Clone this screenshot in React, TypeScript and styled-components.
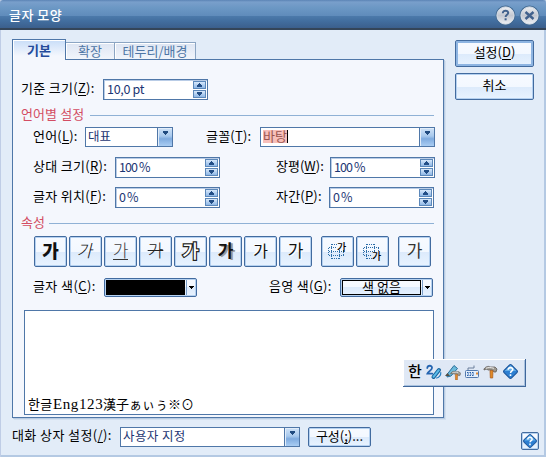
import React from "react";
import styled, { createGlobalStyle, css } from "styled-components";

const edge = "#4f77a8";
const ink = "#1d3673";

const GlobalStyle = createGlobalStyle`
  *, *::before, *::after { box-sizing: border-box; }
  body { margin: 0; font-family: "Noto Sans CJK KR", "Noto Sans", sans-serif; font-size: 13px; line-height: 16px; color: #000; overflow: hidden; }
  svg { display: block; flex: none; }
`;

const Dialog = styled.div`
  position: relative;
  width: 546px;
  height: 457px;
  background: #e2ecf8;
  overflow: hidden;
  box-shadow: inset 1px 0 #bfcde6, inset -2px -2px #b4c9e3;
`;

const TitleBar = styled.header`
  height: 30px;
  display: flex;
  align-items: center;
  padding: 0 6px 0 9px;
  background: linear-gradient(#5b84b5 0, #799fcb 2px, #6b97c4 8px, #5f8bbb 16px, #4c7aab 16px, #426e9f 21px, #3b5f8d 28px, #344559 28px, #344559 30px);
  border-radius: 3px 3px 0 0;
`;

const Title = styled.h1`
  flex: 1;
  margin: 0;
  font-size: 13px;
  line-height: 16px;
  font-weight: 500;
  letter-spacing: 0.5px;
  color: #fff;
`;

const TitleIcons = styled.div`
  display: flex;
  gap: 3px;
`;

const Main = styled.div`
  display: flex;
  height: 388px;
  padding: 9px 0 0 12px;
`;

const TabSheet = styled.section`
  width: 432px;
  height: 379px;
  flex: none;
`;

const TabList = styled.div`
  display: flex;
  align-items: flex-end;
  height: 21px;
  margin-bottom: -1px;
  position: relative;
`;

const Tab = styled.div<{ $w: number; $active?: boolean }>`
  width: ${(p) => p.$w}px;
  height: 17px;
  margin-bottom: 1px;
  display: flex;
  justify-content: center;
  align-items: center;
  border: 1px solid #8ba5c3;
  border-left: 0;
  border-bottom: 0;
  box-shadow: inset 1px 1px #fff;
  background: linear-gradient(#dde5f3, #f1f5fb);
  color: #4e76a5;
  line-height: 15px;
  padding-bottom: 2px;
  letter-spacing: 0;
  ${(p) =>
    p.$active &&
    css`
      height: 21px;
      margin-bottom: 0;
      border: 1px solid ${edge};
      border-bottom: 0;
      background: linear-gradient(#c8ddf8, #f4f7fd 16px);
      color: #244b9b;
      font-weight: 700;
      padding-bottom: 2px;
    `}
`;

const Panel = styled.div`
  width: 432px;
  height: 359px;
  border: 1px solid ${edge};
  background: #f4f7fd;
  box-shadow: 1px 1px #b9cce3, 2px 2px #d3e0ef;
  padding: 19px 0 0 8px;
`;

const Row = styled.div<{ $cols: string; $h: number; $mt?: number }>`
  display: grid;
  grid-template-columns: ${(p) => p.$cols};
  height: ${(p) => p.$h}px;
  margin-top: ${(p) => p.$mt ?? 0}px;
  align-items: center;
`;

const Label = styled.label<{ $ls?: number; $indent?: number }>`
  padding: 0 0 3px ${(p) => p.$indent ?? 0}px;
  letter-spacing: ${(p) => p.$ls ?? 0.2}px;
  white-space: nowrap;
  line-height: 16px;
  u { text-underline-offset: 2px; text-decoration-thickness: 1px; }
`;

const Field = styled.div`
  display: flex;
  height: 21px;
  border: 1px solid ${edge};
  background: #fff;
  box-shadow: inset 1px 1px #b9cce6;
  padding: 1px 1px 1px 3px;
  color: ${ink};
`;

const FieldText = styled.span<{ $ls?: number }>`
  flex: 1;
  line-height: 16px;
  font-size: 12.5px;
  letter-spacing: ${(p) => p.$ls ?? -0.3}px;
  white-space: nowrap;
`;

const Steppers = styled.span`
  display: flex;
  flex-direction: column;
  gap: 1px;
  svg { width: 13px; height: 8px; background: linear-gradient(#d7e8fb, #8eb7e6); border: 1px solid #5c88ba; }
`;

const Select = styled(Field)`
  height: 20px;
  box-shadow: none;
  padding: 0 0 0 2px;
`;

const DropButton = styled.span`
  width: 15px;
  height: 18px;
  border-left: 1px solid ${edge};
  background: linear-gradient(#cfe2f7, #a8c9ed 45%, #7fabdf 60%, #a9cdf3);
  box-shadow: inset 1px 1px #e1edfa;
  display: flex;
  justify-content: center;
  padding-top: 3px;
`;

const Selected = styled.mark`
  display: block;
  width: 25px;
  height: 13px;
  line-height: 12px;
  margin-top: 2px;
  background: #f8bfba;
  color: #9a5550;
  border-right: 1px solid #000;
  font-size: 13px;
  letter-spacing: 0;
`;

const SectionHead = styled.div<{ $mt: number; $gap: number }>`
  display: flex;
  align-items: center;
  gap: ${(p) => p.$gap}px;
  width: 413px;
  height: 16px;
  margin-top: ${(p) => p.$mt}px;
  color: #d34d63;
  letter-spacing: 0.1px;
  white-space: nowrap;
  line-height: 14px;
  &::after { content: ""; flex: 1; height: 1px; background: #8fb1d5; }
`;

const SectionTitle = styled.span`
  padding-bottom: 2px;
`;

const buttonFace = css`
  border: 1px solid #426b9f;
  border-radius: 2px;
  box-shadow: inset 0 0 0 1px #b5d1f0;
  background: linear-gradient(#f7faff 0, #f3f8ff 50%, #dceafb 50%, #e8f3ff 100%);
`;

const StyleBar = styled.div`
  display: flex;
  gap: 2px;
  padding-left: 13px;
  margin-top: 5px;
`;

const StyleButton = styled.button<{ $ml?: number }>`
  ${buttonFace}
  width: 33px;
  height: 31px;
  margin: 0 0 0 ${(p) => p.$ml ?? 0}px;
  padding: 0 0 2px;
  display: flex;
  align-items: center;
  justify-content: center;
`;

type Look = "bold" | "italic" | "underline" | "strike" | "outline" | "shadow" | "emboss" | "engrave" | "plain";

const looks: Record<Look, ReturnType<typeof css>> = {
  bold: css`font-weight: 900; font-size: 18px;`,
  italic: css`transform: skewX(-14deg);`,
  underline: css`border-bottom: 1px solid #333; color: #444;`,
  strike: css`text-decoration: line-through 1px; color: #222;`,
  outline: css`color: #fff; font-weight: 500; font-size: 18px; -webkit-text-stroke: 2.4px #222; paint-order: stroke fill;`,
  shadow: css`font-weight: 700; text-shadow: 2px 1px #999;`,
  emboss: css`font-weight: 400; font-size: 16px; text-shadow: -1px -1px #fff;`,
  engrave: css`font-weight: 400; text-shadow: 1px 1px #fff;`,
  plain: css`font-weight: 400; color: #333;`,
};

const Sample = styled.span<{ $look: Look }>`
  font-family: "Noto Sans CJK KR", sans-serif;
  font-size: 17px;
  font-weight: 300;
  line-height: 18px;
  height: 19px;
  color: #111;
  ${(p) => looks[p.$look]}
`;

const ColorBox = styled.div`
  ${buttonFace}
  height: 19px;
  display: flex;
  padding: 1px;
`;

const Swatch = styled.span<{ $color: string }>`
  width: 79px;
  height: 15px;
  border: 1px solid #000;
  background: ${(p) => p.$color};
  font-size: 13px;
  line-height: 11px;
  text-align: center;
`;

const SwatchArrow = styled.span`
  flex: 1;
  margin-left: 1px;
  border-left: 1px solid #7c9fc9;
  display: flex;
  align-items: center;
  justify-content: center;
`;

const Preview = styled.div`
  width: 410px;
  height: 105px;
  margin: 13px 0 0 3px;
  border: 1px solid ${edge};
  background: #fff;
  display: flex;
  align-items: flex-end;
  padding: 0 0 2px 3px;
  font-size: 13px;
  line-height: 16px;
`;

const PreviewRun = styled.span<{ $latin?: boolean; $w: number; $ls: number }>`
  width: ${(p) => p.$w}px;
  white-space: nowrap;
  font-family: ${(p) => (p.$latin ? '"Liberation Serif", serif' : '"Noto Sans CJK KR", sans-serif')};
  font-size: ${(p) => (p.$latin ? 15 : 13)}px;
  letter-spacing: ${(p) => p.$ls}px;
`;

const Actions = styled.div`
  display: flex;
  flex-direction: column;
  gap: 6px;
  padding: 1px 0 0 11px;
`;

const PushButton = styled.button<{ $default?: boolean; $w?: number; $h?: number }>`
  ${buttonFace}
  width: ${(p) => p.$w ?? 79}px;
  height: ${(p) => p.$h ?? 27}px;
  padding: 0 0 3px;
  color: #000;
  font: 13px/16px "Noto Sans CJK KR", sans-serif;
  letter-spacing: 0;
  white-space: nowrap;
  u { text-underline-offset: 2px; }
  ${(p) => p.$default && css`box-shadow: inset 0 0 0 2px #8eb5e2;`}
`;

const Footer = styled.footer`
  display: grid;
  grid-template-columns: 108px 180px 8px 63px 150px 18px;
  height: 39px;
  padding: 9px 0 0 12px;
  align-items: start;
`;

const HelpButton = styled.button`
  ${buttonFace}
  width: 18px;
  height: 18px;
  margin-top: 5px;
  padding: 0;
  display: flex;
  align-items: center;
  justify-content: center;
`;

const ImeBar = styled.aside`
  position: absolute;
  left: 403px;
  top: 359px;
  width: 123px;
  height: 28px;
  display: flex;
  align-items: center;
  padding: 0 0 2px 5px;
  gap: 3px;
  background: #dfe8f5;
  border-right: 1px solid #3f679b;
  border-bottom: 1px solid #3f679b;
  box-shadow: inset 1px 1px #fff, inset -1px -1px #a9c2df;
`;

const ImeMode = styled.span`
  width: 15px;
  font-size: 15px;
  line-height: 16px;
  font-weight: 500;
  padding-bottom: 1px;
`;

const RoundIcon = ({ kind }: { kind: "help" | "close" }) => (
  <svg width="21" height="21" viewBox="0 0 21 21">
    <defs>
      <linearGradient id={`metal-${kind}`} x1="0" y1="0" x2="0" y2="1">
        <stop offset="0" stopColor="#eef0f3" />
        <stop offset=".5" stopColor="#c3c8d1" />
        <stop offset="1" stopColor="#eef1f6" />
      </linearGradient>
    </defs>
    <circle cx="10.5" cy="10.5" r="9.9" fill="#426991" />
    <circle cx="10.5" cy="10.5" r="8.6" fill={`url(#metal-${kind})`} stroke="#dde3eb" />
    {kind === "close" ? (
      <path d="M6.5 7l8 7M14.5 7l-8 7" stroke="#41618c" strokeWidth="2.4" />
    ) : (
      <g fill="none" stroke="#41618c" strokeWidth="2">
        <path d="M7.8 8.2c0-3.5 5.6-3.2 5.4-.2-.2 1.9-2.6 1.7-2.6 4" />
        <path d="M10.6 13.3v2" />
      </g>
    )}
  </svg>
);

const Steps = () => (
  <Steppers>
    <svg viewBox="0 0 11 6"><path d="M5 1h1v1h1v1h1v2H3V3h1V2h1z" fill="#234e86" /></svg>
    <svg viewBox="0 0 11 6"><path d="M3 1h5v2H7v1H6v1H5V4H4V3H3z" fill="#234e86" /></svg>
  </Steppers>
);

const Spin = ({ children, ls }: { children: React.ReactNode; ls?: number }) => (
  <Field><FieldText $ls={ls}>{children}</FieldText><Steps /></Field>
);

const Drop = () => (
  <DropButton>
    <svg width="7" height="5" viewBox="0 0 7 5"><path d="M1 0h5v2H5v1H4v1H3V3H2V2H1z" fill="#204b80" /></svg>
  </DropButton>
);

const TinyArrow = () => (
  <SwatchArrow>
    <svg width="5" height="3" viewBox="0 0 5 3"><path d="M0 0h5v1H4v1H3v1H2V2H1V1H0z" /></svg>
  </SwatchArrow>
);

const Diamond = ({ size }: { size: number }) => (
  <svg width={size} height={size} viewBox="0 0 16 16">
    <rect x="3" y="3" width="10" height="10" rx="1.5" transform="rotate(45 8 8)" fill="#2d7fd2" stroke="#1f579b" />
    <path d="M2.5 7.5L8 2l5.5 5.5z" fill="#65afe9" />
    <path d="M5.8 6.4c0-3 4.5-2.5 4.3-.1-.2 1.5-2 1.4-2 3M8 10.6v1.6" fill="none" stroke="#fff" strokeWidth="1.5" />
  </svg>
);

const ScriptIcon = ({ raised }: { raised: boolean }) => (
  <svg width="22" height="22" viewBox="0 0 22 22" overflow="visible" fontFamily="Noto Sans CJK KR">
    <path
      d={raised
        ? "M4.500 4v15M12.500 10v9M2 7.500h8M2 15.500h15M16.500 10v6M2 11.500h15M5 4.500h5M5 18.500h8M1.500 8v8"
        : "M4.500 4v15M12.500 4v8M2 7.500h15M2 15.500h8M16.500 8v3M2 11.500h12M5 4.500h8M5 18.500h6M1.500 8v8"}
      fill="none"
      stroke="#2c6da8"
      strokeDasharray="1 1"
      shapeRendering="crispEdges"
    />
    <text x="10" y={raised ? 11 : 20} fontSize="10" fontWeight="500">가</text>
  </svg>
);

const HandwritingIcon = () => (
  <svg width="16" height="16" viewBox="0 0 16 16" fill="none" strokeLinecap="round">
    <path d="M1.3 4c.3-3 5-3 4.700 0-.2 2.700-4 3-4.700 5.700h5" stroke="#2565b1" strokeWidth="1.8" />
    <path d="M7.500 13L13 6" stroke="#17629b" strokeWidth="4" />
    <path d="M7.500 12.800L12.800 6.200" stroke="#5bbce9" strokeWidth="2" />
    <path d="M10.500 14c2.500 0 4.500-3 4.300-5.500" stroke="#267fc2" strokeWidth="1.200" />
  </svg>
);

const Hammer = () => (
  <g>
    <path d="M1 5c2-3 5-3 6-2h5l2 2-1 3h-2L9.500 6H5C4 5 3 5 1 6z" fill="#9c9890" stroke="#605c58" strokeWidth=".8" />
    <path d="M7 6.500h3L9.700 14H7.300z" fill="#e28a26" stroke="#a75a1d" strokeWidth=".7" />
    <path d="M3 4.300c2-1 5-1 8 0" stroke="#eee" />
  </g>
);

const ToolPenIcon = () => (
  <svg width="16" height="16" viewBox="0 0 16 16" fill="none">
    <path d="M2 10.500L9 1.500l3.500 3L6 12l-4 1z" fill="#6cbadb" stroke="#2c719b" />
    <path d="M0 12l2.500-3 2.500 3z" fill="#554e43" />
    <g transform="translate(5 5.500) scale(.76)"><Hammer /></g>
  </svg>
);

const KeyboardIcon = () => (
  <svg width="16" height="16" viewBox="0 0 16 16" fill="none">
    <path d="M4 6V4h6V1.500" stroke="#6b7f9b" />
    <rect x="1.500" y="6.500" width="13" height="7" rx="1" fill="#e5effb" stroke="#5279ad" />
    <path d="M3 8.500h7M3 11.500h7M3.500 10h7" stroke="#285faa" strokeWidth="1.200" strokeDasharray="1.500 1" />
    <path d="M12 9.500h2" stroke="#e28a36" strokeWidth="2" />
  </svg>
);

const sampleLooks: Look[] = ["bold", "italic", "underline", "strike", "outline", "shadow", "emboss", "engrave"];

export default function App() {
  return (
    <>
      <GlobalStyle />
      <Dialog>
        <TitleBar>
          <Title>글자 모양</Title>
          <TitleIcons><RoundIcon kind="help" /><RoundIcon kind="close" /></TitleIcons>
        </TitleBar>
        <Main>
          <TabSheet>
            <TabList>
              <Tab $w={54} $active>기본</Tab>
              <Tab $w={49}>확장</Tab>
              <Tab $w={81}>테두리/배경</Tab>
            </TabList>
            <Panel>
              <Row $cols="82px 105px" $h={21}>
                <Label $ls={0.3}>기준 크기(<u>Z</u>):</Label>
                <Spin>10,0 pt</Spin>
              </Row>
              <SectionHead $mt={7} $gap={6}><SectionTitle>언어별 설정</SectionTitle></SectionHead>
              <Row $cols="64px 88px 33px 54px 175px" $h={20} $mt={4}>
                <Label $indent={12}>언어(<u>L</u>):</Label>
                <Select><FieldText $ls={0}>대표</FieldText><Drop /></Select>
                <span />
                <Label>글꼴(<u>T</u>):</Label>
                <Select><FieldText><Selected>바탕</Selected></FieldText><Drop /></Select>
              </Row>
              <Row $cols="94px 105px 56px 54px 105px" $h={21} $mt={10}>
                <Label $indent={12} $ls={0.3}>상대 크기(<u>R</u>):</Label>
                <Spin ls={-0.9}>100 %</Spin>
                <span />
                <Label $ls={0}>장평(<u>W</u>):</Label>
                <Spin ls={-0.9}>100 %</Spin>
              </Row>
              <Row $cols="94px 105px 56px 53px 105px" $h={21} $mt={9}>
                <Label $indent={12} $ls={0.3}>글자 위치(<u>F</u>):</Label>
                <Spin ls={-0.9}>0 %</Spin>
                <span />
                <Label>자간(<u>P</u>):</Label>
                <Spin ls={-0.9}>0 %</Spin>
              </Row>
              <SectionHead $mt={7} $gap={4}><SectionTitle>속성</SectionTitle></SectionHead>
              <StyleBar>
                {sampleLooks.map((look) => (
                  <StyleButton key={look}><Sample $look={look}>가</Sample></StyleButton>
                ))}
                <StyleButton $ml={7}><ScriptIcon raised /></StyleButton>
                <StyleButton><ScriptIcon raised={false} /></StyleButton>
                <StyleButton $ml={7}><Sample $look="plain">가</Sample></StyleButton>
              </StyleBar>
              <Row $cols="83px 93px 72px 71px 93px" $h={19} $mt={11}>
                <Label $indent={12} $ls={0.4}>글자 색(<u>C</u>):</Label>
                <ColorBox><Swatch $color="#000" /><TinyArrow /></ColorBox>
                <span />
                <Label $ls={0.3}>음영 색(<u>G</u>):</Label>
                <ColorBox><Swatch $color="transparent">색 없음</Swatch><TinyArrow /></ColorBox>
              </Row>
              <Preview>
                <PreviewRun $w={25} $ls={0.2}>한글</PreviewRun>
                <PreviewRun $latin $w={50} $ls={0.6}>Eng123</PreviewRun>
                <PreviewRun $w={95} $ls={0}>漢子ぁぃぅ※⊙</PreviewRun>
              </Preview>
            </Panel>
          </TabSheet>
          <Actions>
            <PushButton $default>설정(<u>D</u>)</PushButton>
            <PushButton>취소</PushButton>
          </Actions>
        </Main>
        <Footer>
          <Label $ls={0.4}>대화 상자 설정(<u>/</u>):</Label>
          <Select><FieldText $ls={0.4}>사용자 지정</FieldText><Drop /></Select>
          <span />
          <PushButton $w={63} $h={20}>구성(<u>;</u>)...</PushButton>
          <span />
          <HelpButton><Diamond size={16} /></HelpButton>
        </Footer>
        <ImeBar>
          <ImeMode>한</ImeMode>
          <HandwritingIcon />
          <ToolPenIcon />
          <KeyboardIcon />
          <svg width="16" height="16" viewBox="0 0 16 16" fill="none"><Hammer /></svg>
          <Diamond size={17} />
        </ImeBar>
      </Dialog>
    </>
  );
}
